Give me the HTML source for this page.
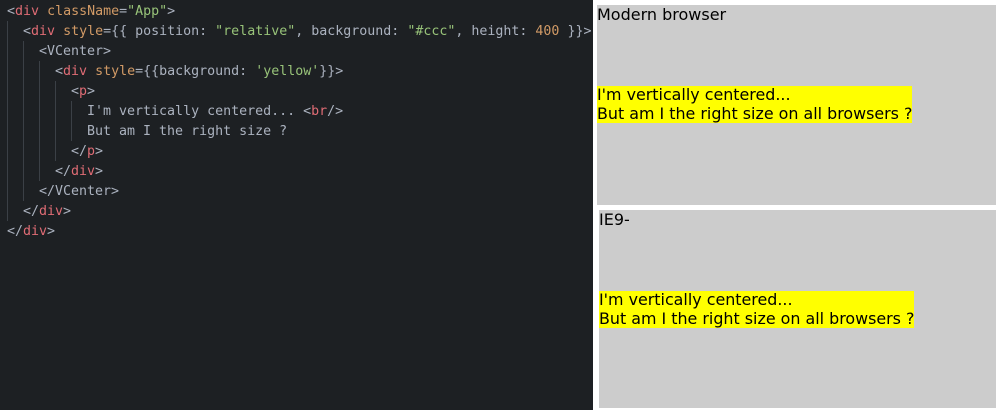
<html><head><style>
body{margin:0;width:1000px;height:410px;background:#fff;position:relative;overflow:hidden}
#code{position:absolute;left:0;top:0;width:593px;height:410px;background:#1d2023;font-family:"DejaVu Sans Mono","Liberation Mono",monospace;font-size:13.3px;color:#abb2bf}
.l{position:absolute;height:20px;line-height:20px;white-space:pre}
.g{position:absolute;width:1px;background:#3b4046}
.t{color:#e06c75}.a{color:#d19a66}.s{color:#98c379}.p{color:#abb2bf}
.box{position:absolute;background:#ccc;font-family:"DejaVu Sans",sans-serif;font-size:16px;color:#000}
.y{position:absolute;left:0;background:#ff0;line-height:18.5px;white-space:nowrap;padding-right:0px;font-size:15.9px}
</style></head><body>
<div id="code">
<div class="g" style="left:7px;top:21px;height:200px"></div>
<div class="g" style="left:23px;top:41px;height:160px"></div>
<div class="g" style="left:39px;top:61px;height:120px"></div>
<div class="g" style="left:55px;top:81px;height:80px"></div>
<div class="g" style="left:71px;top:101px;height:40px"></div>
<div class="l" style="left:7px;top:2px"><span class="p">&lt;</span><span class="t">div</span> <span class="a">className</span>=<span class="s">"App"</span>&gt;</div>
<div class="l" style="left:23px;top:22px">&lt;<span class="t">div</span> <span class="a">style</span>={{ position: <span class="s">"relative"</span>, background: <span class="s">"#ccc"</span>, height: <span class="a">400</span> }}&gt;</div>
<div class="l" style="left:39px;top:42px">&lt;VCenter&gt;</div>
<div class="l" style="left:55px;top:62px">&lt;<span class="t">div</span> <span class="a">style</span>={{background: <span class="s">'yellow'</span>}}&gt;</div>
<div class="l" style="left:71px;top:82px">&lt;<span class="t">p</span>&gt;</div>
<div class="l" style="left:87px;top:102px">I'm vertically centered... &lt;<span class="t">br</span>/&gt;</div>
<div class="l" style="left:87px;top:122px">But am I the right size ?</div>
<div class="l" style="left:71px;top:142px">&lt;/<span class="t">p</span>&gt;</div>
<div class="l" style="left:55px;top:162px">&lt;/<span class="t">div</span>&gt;</div>
<div class="l" style="left:39px;top:182px">&lt;/VCenter&gt;</div>
<div class="l" style="left:23px;top:202px">&lt;/<span class="t">div</span>&gt;</div>
<div class="l" style="left:7px;top:222px">&lt;/<span class="t">div</span>&gt;</div>
</div>
<div class="box" style="left:597px;top:5px;width:399px;height:200px">
<div style="position:absolute;left:0;top:0;line-height:19px">Modern browser</div>
<div class="y" style="top:81px">I'm vertically centered...<br>But am I the right size on all browsers ?</div>
</div>
<div class="box" style="left:599px;top:210px;width:397px;height:198px">
<div style="position:absolute;left:0;top:0;line-height:19px">IE9-</div>
<div class="y" style="top:81px">I'm vertically centered...<br>But am I the right size on all browsers ?</div>
</div>
</body></html>
